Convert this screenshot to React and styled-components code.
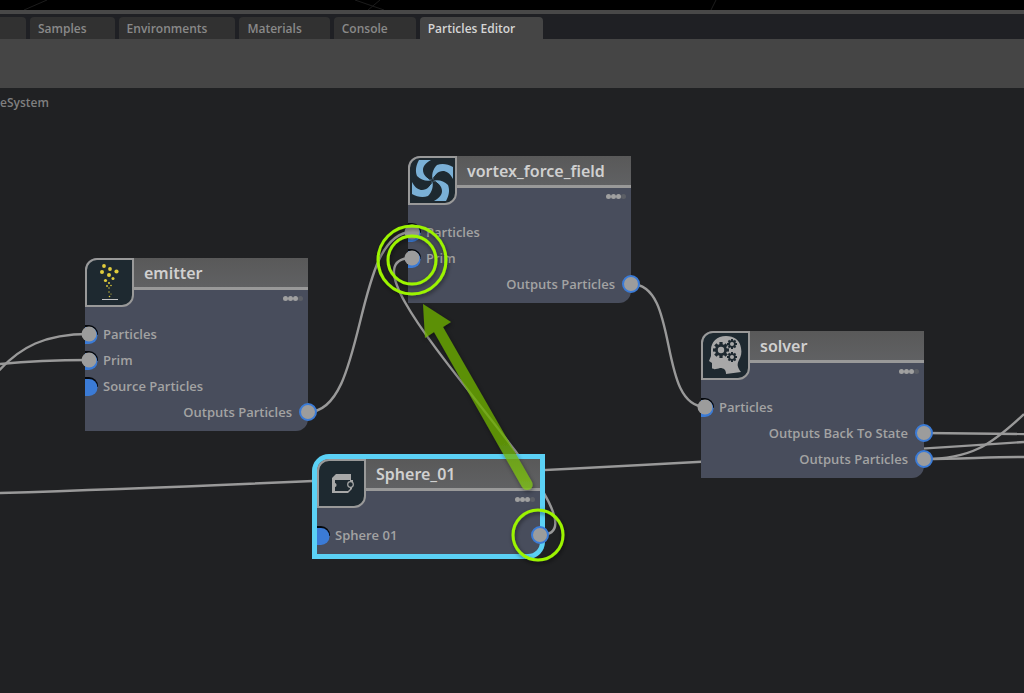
import styled, { createGlobalStyle, css } from "styled-components";

const GlobalStyle = createGlobalStyle`
* {
  box-sizing: border-box;
}
body {
  margin: 0;
  background: #202123;
  font-family: "Open Sans", "Noto Sans", sans-serif;
}
`;

const Container = styled.div`
display: flex;
flex-direction: column;
min-height: 100vh;
overflow: hidden;
`;

const Viewport = styled.div`
height: 10px;
background: #000000;

svg {
  display: block;
}
`;

const TabBar = styled.nav`
display: flex;
align-items: flex-end;
gap: 4px;
height: 29px;
border-top: 4px solid #484848;
background: #1f2024;
`;

const Tab = styled.button`
height: 22px;
padding: 2px 28px 0px 8px;
border: none;
border-radius: 4px 4px 0px 0px;
font-family: inherit;
font-size: 12px;
font-weight: 600;
line-height: 20px;
white-space: nowrap;
cursor: pointer;
color: ${(props) => (props.$active ? "#d6d6d6" : "#898989")};
background: ${(props) => (props.$active ? "#454545" : "#313131")};
`;

const CutTab = styled(Tab)`
width: 26px;
padding: 0px;
border-top-left-radius: 0px;
`;

const Toolbar = styled.div`
height: 49px;
background: #454545;
`;

const Graph = styled.main`
position: relative;
flex: 1;
min-height: 600px;
background: #202123;
`;

const Path = styled.p`
margin: 0px;
padding-top: 6px;
font-size: 12px;
font-weight: 600;
line-height: 18px;
color: #7f7f7f;
`;

const Layer = styled.svg`
position: absolute;
top: 0px;
left: 0px;
overflow: visible;
pointer-events: none;
`;

const NodeCard = styled.article`
position: absolute;
left: ${(props) => props.$x}px;
top: ${(props) => props.$y}px;
width: 223px;
padding-bottom: 6px;
border-radius: 12px 0px 12px 0px;
background: #484d5c;
${(props) =>
    props.$selected &&
    css`
      box-shadow: 0px 0px 0px 5px #5bd1f5;
    `}
`;

const NodeTop = styled.header`
display: flex;
align-items: flex-start;
height: 49px;
`;

const IconBox = styled.div`
width: 49px;
height: 49px;
border: 2px solid #999999;
border-radius: 12px 0px 12px 0px;
background: #1e2930;

svg {
  display: block;
}
`;

const TitleColumn = styled.div`
flex: 1;
`;

const Title = styled.h2`
margin: 0px;
height: 32px;
padding-left: 10px;
border-bottom: 3px solid #999999;
background: linear-gradient(#595959, #606163);
font-family: "Noto Sans", "Open Sans", sans-serif;
font-size: 16px;
font-weight: 600;
line-height: 30px;
color: #d0d0d0;
`;

const Dots = styled.div`
display: flex;
justify-content: flex-end;
padding: 6px 5px 0px 0px;
`;

const Dot = styled.span`
width: 5px;
height: 5px;
border-radius: 50%;
background: ${(props) => (props.$dim ? "#5c5f66" : "#a0a0a0")};
`;

const PortList = styled.ul`
margin: 0px;
padding: 14px 0px 0px 0px;
list-style: none;
`;

const PortRow = styled.li`
display: flex;
justify-content: space-between;
height: 26px;
font-size: 13px;
font-weight: 600;
line-height: 26px;
color: #a3a3a3;
`;

const Input = styled.span`
display: flex;
align-items: center;
gap: 4px;

svg {
  overflow: visible;
}
`;

const Output = styled.span`
display: flex;
align-items: center;
gap: 7px;
margin-left: auto;
margin-right: -9px;
`;

const EmitterIcon = () => (
  <svg width="45" height="45" viewBox="0 0 45 45" fill="#e0cc3c">
    <circle cx="17" cy="6" r="1.9" />
    <circle cx="23" cy="9" r="1.9" />
    <circle cx="15" cy="12" r="2" />
    <circle cx="29.5" cy="11.5" r="2.1" />
    <circle cx="22" cy="15" r="2" />
    <circle cx="26" cy="18.5" r="1.5" />
    <circle cx="18.5" cy="20.5" r="1.6" />
    <circle cx="22" cy="23" r="1" />
    <circle cx="24" cy="25.5" r="0.8" />
    <circle cx="20" cy="26" r="0.9" />
    <circle cx="22" cy="28" r="0.7" />
    <circle cx="22" cy="32" r="0.7" />
    <circle cx="24" cy="34" r="0.6" />
    <circle cx="22.5" cy="36.5" r="0.8" />
    <rect x="15" y="39" width="16" height="1" fill="#c4c4c4" />
  </svg>
);

const VortexIcon = () => (
  <svg width="45" height="45" viewBox="0 0 45 45" fill="#7ab0d6">
    {[0, 90, 180, 270].map((angle) => (
      <path
        key={angle}
        transform={`rotate(${angle} 22.5 22.5)`}
        d="M9 2H21C15 5 13 9 13 12C13 17 17 21 23 22C17 24 11 22 7 18C5 13 6 7 9 2z"
      />
    ))}
    <g fill="none" stroke="#1e2930" strokeWidth="1">
      {[0, 90, 180, 270].map((angle) => (
        <path
          key={angle}
          transform={`rotate(${angle} 22.5 22.5)`}
          d="M22.5 22.5C20 22 17 20 16 17"
        />
      ))}
    </g>
  </svg>
);

const Gear = ({ x, y, r }) => (
  <g transform={`translate(${x} ${y})`} fill="#1e2930">
    {[0, 45, 90, 135].map((angle) => (
      <rect
        key={angle}
        x={-r * 0.2}
        y={-r}
        width={r * 0.4}
        height={r * 2}
        transform={`rotate(${angle})`}
      />
    ))}
    <circle r={r * 0.75} />
    <circle r={r * 0.4} fill="#a8a8a8" />
  </g>
);

const SolverIcon = () => (
  <svg width="45" height="45" viewBox="0 0 45 45">
    <path
      d="M23 3C14 3 8 9 8 17V23L6 28L9 30V35C10 37 14 36 17 35C21 35 23 37 23 41L38 39C34 34 34 31 36 27C38 23 39 20 38 15C37 7 31 3 23 3z"
      fill="#a8a8a8"
    />
    <Gear x={18} y={17} r={8} />
    <Gear x={29} y={11} r={5} />
    <Gear x={29} y={24} r={5} />
  </svg>
);

const SphereIcon = () => (
  <svg width="45" height="45" viewBox="0 0 45 45">
    <path
      fillRule="evenodd"
      d="M17 13H32V19H34V22H31V19H16V22C18 22 18 26 16 26V30H29L31 28V25H33V28L29 32H13V17z"
      fill="#a8a8a8"
    />
    <circle cx="31.5" cy="23.5" r="2.8" fill="#1e2930" stroke="#a8a8a8" strokeWidth="1.2" />
  </svg>
);

const tabs = ["Samples", "Environments", "Materials", "Console", "Particles Editor"];

const nodes = [
  {
    name: "emitter",
    x: 85,
    y: 170,
    Icon: EmitterIcon,
    rows: [
      { input: "Particles", linked: true },
      { input: "Prim", linked: true },
      { input: "Source Particles" },
      { output: "Outputs Particles" },
    ],
  },
  {
    name: "vortex_force_field",
    x: 408,
    y: 68,
    Icon: VortexIcon,
    rows: [
      { input: "Particles", linked: true },
      { input: "Prim", linked: true },
      { output: "Outputs Particles" },
    ],
  },
  {
    name: "solver",
    x: 701,
    y: 243,
    Icon: SolverIcon,
    rows: [
      { input: "Particles", linked: true },
      { output: "Outputs Back To State" },
      { output: "Outputs Particles" },
    ],
  },
  {
    name: "Sphere_01",
    x: 317,
    y: 371,
    Icon: SphereIcon,
    selected: true,
    rows: [{ input: "Sphere 01", output: " " }],
  },
];

const wires = [
  "M-4 286C20 258 46 246 89 246",
  "M0 276C30 273 50 272 89 272",
  "M0 405C200 399 640 380 1024 354",
  "M308 324C368 324 352 144 412 144",
  "M540 447C626 447 318 170 412 170",
  "M631 196C681 196 656 319 706 319",
  "M924 345L1024 346",
  "M924 371C960 371 990 369 1024 369",
  "M924 371C970 371 990 358 1024 326",
];

const Node = ({ name, x, y, Icon, rows, selected }) => (
  <NodeCard $x={x} $y={y} $selected={selected}>
    <NodeTop>
      <IconBox>
        <Icon />
      </IconBox>
      <TitleColumn>
        <Title>{name}</Title>
        <Dots>
          <Dot />
          <Dot />
          <Dot />
          <Dot $dim />
        </Dots>
      </TitleColumn>
    </NodeTop>
    <PortList>
      {rows.map((row) => (
        <PortRow key={row.input || row.output}>
          {row.input && (
            <Input>
              <svg width="14" height="20" viewBox="0 0 14 20">
                <path d="M0 1H4A9 9 0 0 1 13 10V11H0z" fill="#05080d" />
                <path d="M0 3H4A8.5 8.5 0 0 1 4 20H0z" fill="#3b7bd6" />
                {row.linked && <circle cx="4" cy="10" r="7.5" fill="#9c9c9c" />}
              </svg>
              {row.input}
            </Input>
          )}
          {row.output && (
            <Output>
              {row.output}
              <svg width="18" height="18" viewBox="0 0 18 18">
                <circle cx="9" cy="9" r="8" fill="#9c9c9c" stroke="#3b7bd6" strokeWidth="2" />
              </svg>
            </Output>
          )}
        </PortRow>
      ))}
    </PortList>
  </NodeCard>
);

const App = () => {
  return (
    <Container>
      <GlobalStyle />
      <Viewport>
        <svg width="100%" height="10" stroke="#1c1c1c">
          <path d="M24 10L47 0M355 0L384 10M368 10L380 0M711 10L716 0" />
        </svg>
      </Viewport>
      <TabBar>
        <CutTab aria-label="Previous tab" />
        {tabs.map((tab) => (
          <Tab key={tab} $active={tab === "Particles Editor"}>
            {tab}
          </Tab>
        ))}
      </TabBar>
      <Toolbar />
      <Graph>
        <Path>eSystem</Path>
        <Layer width="100%" height="100%" fill="none" stroke="#999999" strokeWidth="2.4">
          {wires.map((d) => (
            <path key={d} d={d} />
          ))}
        </Layer>
        {nodes.map((node) => (
          <Node key={node.name} {...node} />
        ))}
        <Layer width="100%" height="100%" fill="none">
          <defs>
            <linearGradient id="arrow" x1="0" y1="0" x2="0" y2="1">
              <stop offset="0" stopColor="#6cac06" />
              <stop offset="0.75" stopColor="#6cac06" />
              <stop offset="1" stopColor="#7fc414" />
            </linearGradient>
            <filter id="shadow" x="-20%" y="-20%" width="140%" height="140%">
              <feDropShadow dx="1" dy="2" stdDeviation="2" floodColor="#000000" floodOpacity="0.5" />
            </filter>
          </defs>
          <path
            d="M423 216L451 234L443 239L532 394C535 401 526 405 522 399L434 244L425 250z"
            fill="url(#arrow)"
            opacity="0.8"
            filter="url(#shadow)"
          />
          <g stroke="#9cf406" strokeWidth="3" filter="url(#shadow)">
            <circle cx="412" cy="172" r="34" />
            <circle cx="412" cy="172" r="24" />
            <circle cx="538" cy="447" r="25" />
          </g>
        </Layer>
      </Graph>
    </Container>
  );
};

export default App;
